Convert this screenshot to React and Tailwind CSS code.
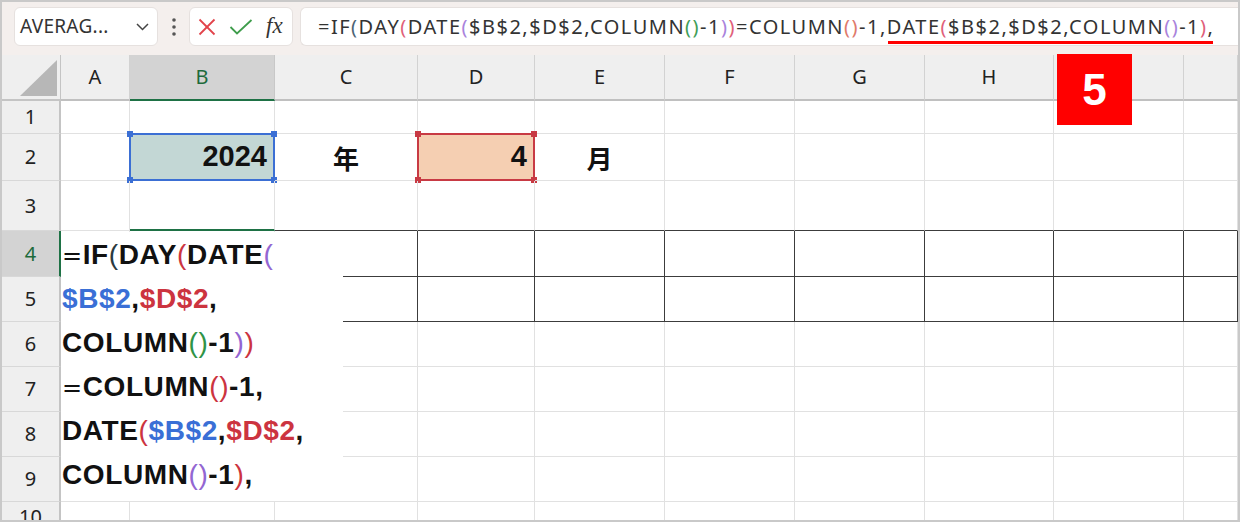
import React from "react";

const cols = ["A", "B", "C", "D", "E", "F", "G", "H", "I", "J"];
const rows = [1, 2, 3, 4, 5, 6, 7, 8, 9, 10];

const C = {
  blue: "text-[#3a6fd6]",
  red: "text-[#cc3440]",
  green: "text-[#2f9447]",
  purple: "text-[#9366d2]",
};

// formula bar pieces: [text, colour class]
const formula = [
  ["=IF", ""],
  ["(", "text-[#4d6475]"],
  ["DAY", ""],
  ["(", "text-[#e0607a]"],
  ["DATE", ""],
  ["(", "text-[#a983dc]"],
  ["$B$2,$D$2,COLUMN", ""],
  ["()", "text-[#3f9e58]"],
  ["-1", ""],
  [")", "text-[#a983dc]"],
  [")", "text-[#e0607a]"],
  ["=COLUMN", ""],
  ["()", "text-[#e07a6a]"],
  ["-1,DATE", ""],
  ["(", "text-[#e0607a]"],
  ["$B$2,$D$2,COLUMN", ""],
  ["()", "text-[#a983dc]"],
  ["-1", ""],
  [")", "text-[#e0607a]"],
  [",", ""],
];

// text box lines; "p" marks a coloured paren (drawn thin)
const lines = [
  [["=", "eq"], ["IF", ""], ["(", "p text-[#2b3a40]"], ["DAY", ""], ["(", "p " + C.red], ["DATE", ""], ["(", "p " + C.purple]],
  [["$B$2", C.blue], [",", ""], ["$D$2", C.red], [",", ""]],
  [["COLUMN", ""], ["()", "p " + C.green], ["-1", ""], [")", "p " + C.purple], [")", "p " + C.red]],
  [["=", "eq"], ["COLUMN", ""], ["()", "p " + C.red], ["-1,", ""]],
  [["DATE", ""], ["(", "p " + C.red], ["$B$2", C.blue], [",", ""], ["$D$2", C.red], [",", ""]],
  [["COLUMN", ""], ["()", "p " + C.purple], ["-1", ""], [")", "p " + C.red], [",", ""]],
];

function Handles({ color }) {
  return (
    <>
      <span className={`absolute -left-[4px] -top-[4px] w-[6px] h-[6px] ${color}`} />
      <span className={`absolute -right-[4px] -top-[4px] w-[6px] h-[6px] ${color}`} />
      <span className={`absolute -left-[4px] -bottom-[4px] w-[6px] h-[6px] ${color}`} />
      <span className={`absolute -right-[4px] -bottom-[4px] w-[6px] h-[6px] ${color}`} />
    </>
  );
}

function FormulaBar() {
  return (
    <div className="h-[53px] bg-[#f4efed] flex items-start pt-[5px] pl-[12px] gap-0">
      {/* Name box */}
      <div className="w-[144px] h-[39px] bg-white rounded-md border border-[#e6e1df] flex items-center pl-[5px] pr-[8px] justify-between">
        <span className="text-[19px] text-[#333] font-['Noto_Sans',sans-serif] leading-none tracking-[0.3px]">AVERAG...</span>
        <svg width="13" height="8" viewBox="0 0 13 8">
          <polyline points="1,1 6.5,6.5 12,1" fill="none" stroke="#444" strokeWidth="1.5" />
        </svg>
      </div>
      <div className="w-[31px] h-[39px] flex items-center justify-center">
        <svg width="4" height="18" viewBox="0 0 4 18">
          <circle cx="2" cy="2" r="1.8" fill="#555" />
          <circle cx="2" cy="9" r="1.8" fill="#555" />
          <circle cx="2" cy="16" r="1.8" fill="#555" />
        </svg>
      </div>
      {/* cancel / enter / fx */}
      <div className="w-[104px] h-[39px] bg-white rounded-md border border-[#e6e1df] flex items-center pl-[8px] gap-[13px]">
        <svg width="18" height="18" viewBox="0 0 18 18">
          <line x1="1.5" y1="1.5" x2="16.5" y2="16.5" stroke="#e2434a" strokeWidth="1.8" />
          <line x1="16.5" y1="1.5" x2="1.5" y2="16.5" stroke="#e2434a" strokeWidth="1.8" />
        </svg>
        <svg width="24" height="16" viewBox="0 0 24 16">
          <polyline points="1.5,8 8,14.5 22.5,1" fill="none" stroke="#3f9d4c" strokeWidth="1.8" />
        </svg>
        <span className="font-['Liberation_Serif',serif] italic text-[23px] text-[#333] leading-none -mt-[2px]">fx</span>
      </div>
      {/* formula */}
      <div className="ml-[7px] flex-1 h-[39px] bg-white rounded-l-md border border-r-0 border-[#e6e1df] flex items-center pl-[17px] relative">
        <span className="text-[20px] text-[#333] font-['Noto_Sans',sans-serif] whitespace-nowrap leading-none tracking-[1.5px]">
          {formula.map(([t, c], i) => (
            <span key={i} className={c}>{t}</span>
          ))}
        </span>
        <span className="absolute left-[587px] top-[33px] w-[325px] h-[3px] bg-[#ff0000]" />
      </div>
    </div>
  );
}

function cellClass(r, ci) {
  const col = cols[ci];
  let cls = "border-r border-b border-[#e1e1e1] relative";
  if (r === 3 && col === "B") cls = "border-r border-[#e1e1e1] border-b-2 border-b-[#1e7145] relative";
  else if (r === 3 && ci >= 2) cls = "border-r border-r-[#e1e1e1] border-b border-b-[#3c3c3c] relative";
  else if ((r === 4 || r === 5) && ci >= 2) cls = "border-r border-b border-[#3c3c3c] relative";
  return cls;
}

function Cell({ r, ci }) {
  const col = cols[ci];
  if (r === 2 && col === "B") {
    return (
      <div className="relative bg-[#c3d7d5] border-2 border-[#3b6fd4] -ml-px -mt-px flex items-center justify-end pr-[6px] text-[29px] font-bold text-[#111] font-['Liberation_Sans',sans-serif]">
        2024
        <Handles color="bg-[#3b6fd4]" />
      </div>
    );
  }
  if (r === 2 && col === "D") {
    return (
      <div className="relative bg-[#f5cfb2] border-2 border-[#c83a44] -ml-px -mt-px flex items-center justify-end pr-[6px] text-[29px] font-bold text-[#111] font-['Liberation_Sans',sans-serif]">
        4
        <Handles color="bg-[#c83a44]" />
      </div>
    );
  }
  let content = null;
  if (r === 2 && col === "C") content = "年";
  if (r === 2 && col === "E") content = "月";
  return (
    <div className={`${cellClass(r, ci)} flex items-center justify-center text-[26px] font-bold text-[#111] font-['Noto_Sans_CJK_JP',sans-serif]`}>
      {content}
    </div>
  );
}

export default function App() {
  return (
    <div className="w-[1240px] h-[522px] border-2 border-[#c9c9c9] overflow-hidden relative bg-white">
      <FormulaBar />
      <div className="relative grid grid-cols-[59px_69px_145px_143px_117px_130px_130px_130px_129px_130px_1fr] grid-rows-[46px_33px_47px_50px_46px_45px_45px_45px_45px_45px_1fr] h-[465px] font-['Noto_Sans',sans-serif]">
        {/* corner */}
        <div className="bg-[#efefef] border-r border-b-2 border-[#c4c4c4] flex items-end justify-end pr-[3px] pb-[3px]">
          <svg width="37" height="36" viewBox="0 0 37 36">
            <polygon points="37,0 37,36 0,36" fill="#b7b7b7" />
          </svg>
        </div>
        {cols.map((c) => (
          <div
            key={c}
            className={
              c === "B"
                ? "bg-[#d3d3d3] text-[#1d6b3b] border-r border-r-[#c8c8c8] border-b-2 border-b-[#1e7145] flex items-center justify-center text-[20px]"
                : "bg-[#efefef] text-[#222] border-r border-r-[#d2d2d2] border-b-2 border-b-[#c0c0c0] flex items-center justify-center text-[20px]"
            }
          >
            {c === "J" ? null : c}
          </div>
        ))}
        {rows.map((r) => (
          <React.Fragment key={r}>
            <div
              className={
                r === 4
                  ? "bg-[#d3d3d3] text-[#1d6b3b] border-r-2 border-r-[#1e7145] border-b border-b-[#d8d8d8] flex items-center justify-center text-[20px]"
                  : "bg-[#efefef] text-[#222] border-r-2 border-r-[#c4c4c4] border-b border-b-[#d8d8d8] flex items-center justify-center text-[20px]"
              }
            >
              {r}
            </div>
            {cols.map((c, ci) => (
              <Cell key={c} r={r} ci={ci} />
            ))}
          </React.Fragment>
        ))}

        {/* text box laid over A4:C9 */}
        <div className="absolute left-[59px] top-[177px] w-[282px] h-[269px] bg-white pl-[1px] font-['Liberation_Sans',sans-serif] font-bold text-[28px] text-[#111] tracking-[0.6px]">
          {lines.map((ln, i) => (
            <div key={i} className="h-[45px] leading-[45px] whitespace-nowrap -mt-[1px] first:mt-0">
              {ln.map(([t, c], j) =>
                c === "eq" ? (
                  <span key={j} className="font-normal font-['DejaVu_Sans',sans-serif] text-[24px]">=</span>
                ) : c.startsWith("p ") ? (
                  <span key={j} className={`font-normal ${c.slice(2)}`}>{t}</span>
                ) : (
                  <span key={j} className={c}>{t}</span>
                )
              )}
            </div>
          ))}
        </div>
      </div>

      {/* step badge */}
      <div className="absolute left-[1055px] top-[52px] w-[75px] h-[71px] bg-[#ff0000] flex items-center justify-center text-white text-[44px] font-bold font-['Liberation_Sans',sans-serif] leading-none">
        5
      </div>
    </div>
  );
}
